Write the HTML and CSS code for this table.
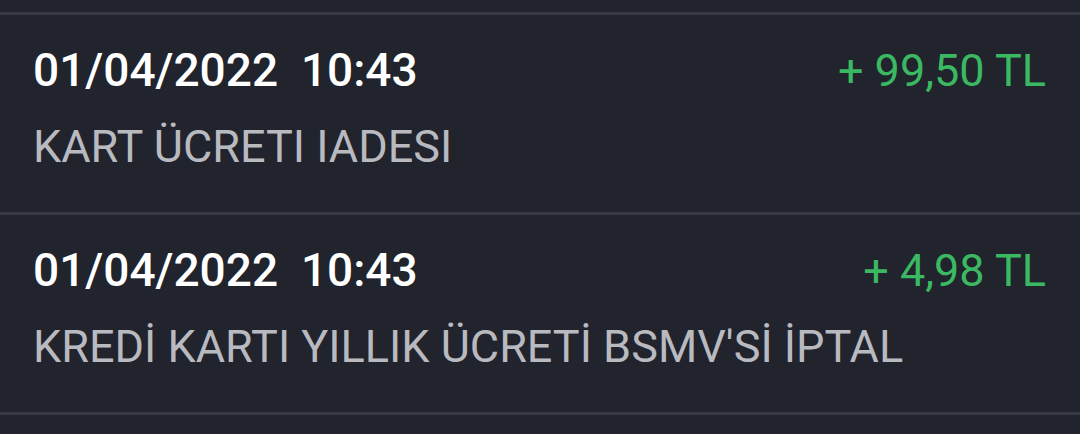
FILE: index.html
```html
<!DOCTYPE html>
<html lang="tr">
<head>
<meta charset="utf-8">
<link rel="stylesheet" href="styles.css">
</head>
<body>
<div class="list">
  <div class="row row-stub"></div>
  <div class="row">
    <div class="row-top">
      <span class="date">01/04/2022&nbsp; 10:43</span>
      <span class="amount">+ 99,50 TL</span>
    </div>
    <div class="desc">KART ÜCRETI IADESI</div>
  </div>
  <div class="row">
    <div class="row-top">
      <span class="date">01/04/2022&nbsp; 10:43</span>
      <span class="amount">+ 4,98 TL</span>
    </div>
    <div class="desc">KREDİ KARTI YILLIK ÜCRETİ BSMV'Sİ İPTAL</div>
  </div>
  <div class="row row-stub"></div>
</div>
</body>
</html>
```
FILE: styles.css
```css
html, body {
  margin: 0;
  padding: 0;
  background: #21232d;
  height: 100%;
  overflow: hidden;
}
body {
  font-family: Roboto, "Liberation Sans", sans-serif;
}
.list {
  display: flex;
  flex-direction: column;
}
.row {
  border-bottom: 3px solid #383a47;
  padding: 28px 34px 38px 33px;
  display: flex;
  flex-direction: column;
  gap: 22px;
}
.row-stub {
  padding: 0;
  height: 12px;
}
.row-stub:last-child {
  border-bottom: none;
  height: 21px;
}
.row-top {
  display: flex;
  justify-content: space-between;
  align-items: baseline;
}
.date {
  font-size: 46px;
  line-height: 54px;
  font-weight: 500;
  color: #ffffff;
}
.amount {
  font-size: 45px;
  line-height: 54px;
  font-weight: 400;
  color: #3bb862;
}
.desc {
  font-size: 45px;
  line-height: 54px;
  font-weight: 400;
  color: #b9b9c0;
}
```
